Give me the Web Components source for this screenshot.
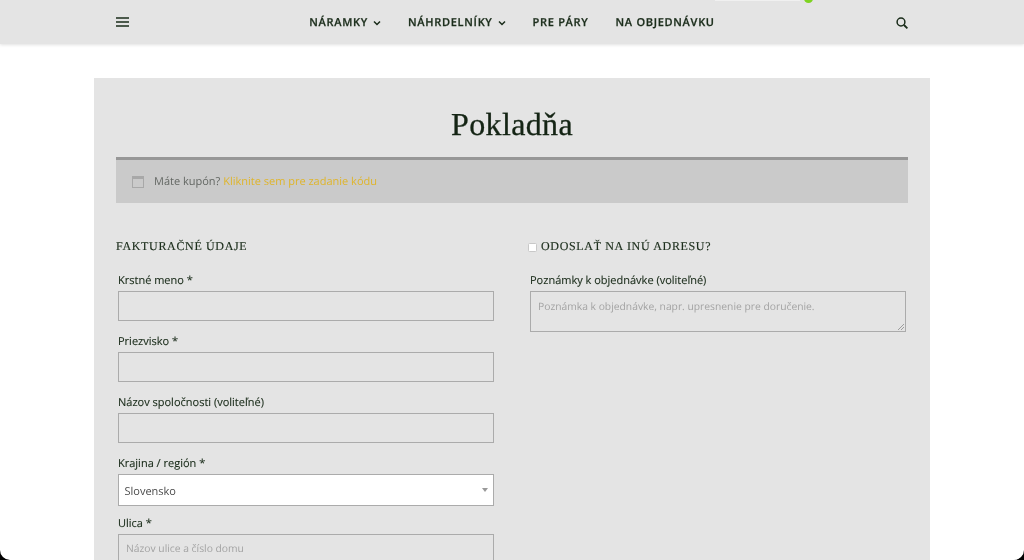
<!DOCTYPE html>
<html lang="sk">
<head>
<meta charset="utf-8">
<title>Pokladňa</title>
<style>
html,body{margin:0;padding:0;background:#fff;height:560px;overflow:hidden}
body{font-family:"Open Sans","Liberation Sans",sans-serif;color:#1a2c1a;text-rendering:geometricPrecision;filter:blur(.3px)}
</style>
</head>
<body>
<site-header>
  <nav-link caret>NÁRAMKY</nav-link>
  <nav-link caret>NÁHRDELNÍKY</nav-link>
  <nav-link>PRE PÁRY</nav-link>
  <nav-link>NA OBJEDNÁVKU</nav-link>
</site-header>
<checkout-card>
  <coupon-notice slot="notice"></coupon-notice>
  <form-section slot="left" title="FAKTURAČNÉ ÚDAJE">
    <form-field label="Krstné meno *"></form-field>
    <form-field label="Priezvisko *"></form-field>
    <form-field label="Názov spoločnosti (voliteľné)"></form-field>
    <form-field label="Krajina / región *" kind="select" value="Slovensko"></form-field>
    <form-field label="Ulica *" placeholder="Názov ulice a číslo domu"></form-field>
  </form-section>
  <form-section slot="right" title="ODOSLAŤ NA INÚ ADRESU?" check>
    <form-field label="Poznámky k objednávke (voliteľné)" kind="textarea" placeholder="Poznámka k objednávke, napr. upresnenie pre doručenie."></form-field>
  </form-section>
</checkout-card>
<window-corners></window-corners>
<script>
function def(name, html, init){
  customElements.define(name, class extends HTMLElement{
    constructor(){super();this.attachShadow({mode:'open'}).innerHTML=html;}
    connectedCallback(){if(init)init(this,this.shadowRoot);}
  });
}
def('site-header',`<style>
:host{display:block;height:44px;background:#e4e4e4;box-shadow:0 1px 3px rgba(0,0,0,.12);position:relative;z-index:2}
.bar{box-sizing:border-box;height:44px;padding:0 116px;display:grid;grid-template-columns:1fr auto 1fr;align-items:center}
nav{display:flex;gap:27px;align-items:center;padding-top:1px}
.burger{display:block}
.search{justify-self:end;display:block;margin-top:1px}
.peek{position:absolute;left:715px;top:0;width:85px;height:1px;background:rgba(255,255,255,.45)}
.dot{position:absolute;left:804px;top:-3px;width:9px;height:6px;border-radius:0 0 5px 5px;background:#7ed321}
</style>
<div class="peek"></div><div class="dot"></div>
<div class="bar">
<svg class="burger" width="13" height="10" viewBox="0 0 13 10"><path d="M0 1h13M0 5h13M0 9h13" stroke="#1a2c1a" stroke-width="1.700" fill="none"/></svg>
<nav><slot></slot></nav>
<svg class="search" width="12" height="12" viewBox="0 0 12 12"><circle cx="5" cy="5" r="3.900" stroke="#1a2c1a" stroke-width="1.500" fill="none"/><path d="M8 8l3.400 3.400" stroke="#1a2c1a" stroke-width="1.800" fill="none"/></svg>
</div>`);
def('nav-link',`<style>
:host{display:inline-flex;align-items:center;gap:5px;font:600 11px/16px "Open Sans",sans-serif;letter-spacing:.7px;color:#1a2c1a;white-space:nowrap;-webkit-text-stroke:.25px #1a2c1a}
svg{display:none}
:host([caret]) svg{display:block}
</style><slot></slot><svg width="8" height="6" viewBox="0 0 8 6"><path d="M1 1.500l3 3 3-3" stroke="#1a2c1a" stroke-width="1.500" fill="none"/></svg>`);
def('checkout-card',`<style>
:host{display:block;box-sizing:border-box;width:836px;margin:34px 0 0 94px;background:#e4e4e4;padding:22px 22px 0;height:482px}
h1{margin:0;height:57px;font:400 32px/48px "Liberation Serif",serif;color:#142414;text-align:center;letter-spacing:.35px;-webkit-text-stroke:.3px #142414}
.cols{display:grid;grid-template-columns:380px 380px;column-gap:32px;margin-top:32.500px}
</style>
<h1>Pokladňa</h1>
<slot name="notice"></slot>
<div class="cols"><slot name="left"></slot><slot name="right"></slot></div>`);
def('coupon-notice',`<style>
:host{display:flex;align-items:center;box-sizing:border-box;height:45.500px;background:#cacaca;border-top:3px solid #979797;padding:1px 0 0 16px;font:400 11px/16px "Open Sans",sans-serif;color:#636763}
svg{margin-right:10px;display:block}
a{color:#dfb52c;text-decoration:none}
</style><svg width="12" height="12" viewBox="0 0 12 12"><rect x=".5" y=".5" width="11" height="11" fill="none" stroke="#a8a8a8"/><rect x=".5" y=".5" width="11" height="2.500" fill="#a8a8a8"/></svg><span>Máte kupón? <a href="#">Kliknite sem pre zadanie kódu</a></span>`);
def('form-section',`<style>
:host{display:block}
h3{margin:0 0 16px;display:flex;align-items:center;height:22px;font:400 12px/22px "Liberation Serif",serif;letter-spacing:.66px;color:#1a2c1a;-webkit-text-stroke:.15px #1a2c1a}
i{display:none;width:9px;height:9px;background:#fff;border:.5px solid #c8c8c8;border-radius:1.500px;margin:2px 4px 0 0;box-sizing:border-box}
:host([check]) i{display:block}
</style><h3><i></i><span></span></h3><slot></slot>`,(el,s)=>{s.querySelector('span').textContent=el.getAttribute('title');});
def('form-field',`<style>
:host{display:block;padding:0 2px;margin-bottom:13px}
:host([kind=select]){margin-bottom:10px}
label{display:block;font:400 11px/16px "Open Sans",sans-serif;color:#1a2c1a;margin-bottom:2px;-webkit-text-stroke:.12px #1a2c1a}
.box{box-sizing:border-box;height:30px;border:1px solid #ababab;font:400 10.300px/28px "Open Sans",sans-serif;color:#a3a3a3;padding:0 7px;position:relative}
.box.select{height:32px;background:#fff;color:#4a4a4a;font-size:11px;line-height:30px;padding:2px 5.500px 0}
.box.select::after{content:"";position:absolute;right:5px;top:13px;border:3px solid transparent;border-top:4px solid #999;border-bottom:0}
.box.textarea{height:41px;line-height:28px;padding-top:1px}
.grip{display:none;position:absolute;right:1px;bottom:1px}
.textarea .grip{display:block}
</style><label></label><div class="box"><span></span><svg class="grip" width="7" height="7" viewBox="0 0 7 7"><path d="M1 7L7 1M4 7l3-3" stroke="#8a8a8a" stroke-width=".8"/></svg></div>`,(el,s)=>{
  s.querySelector('label').textContent=el.getAttribute('label');
  const k=el.getAttribute('kind');const b=s.querySelector('.box');
  if(k)b.classList.add(k);
  s.querySelector('span').textContent=el.getAttribute('value')||el.getAttribute('placeholder')||'';
});
def('window-corners',`<style>
:host{display:block;position:fixed;inset:0;pointer-events:none;z-index:5}
svg{position:absolute;bottom:0}
.l{left:0}.r{right:0;transform:scaleX(-1)}
</style><svg class="l" width="10" height="10" viewBox="0 0 10 10"><path d="M0 0A10 10 0 0 0 10 10H0Z" fill="#000"/></svg><svg class="r" width="10" height="10" viewBox="0 0 10 10"><path d="M0 0A10 10 0 0 0 10 10H0Z" fill="#000"/></svg>`);
</script>
</body>
</html>
